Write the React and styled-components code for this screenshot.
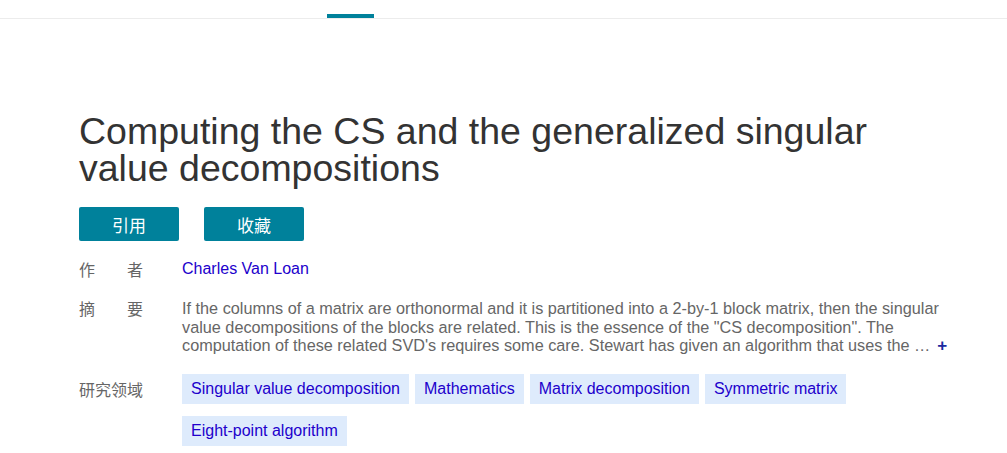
import React from 'react';
import styled, { createGlobalStyle } from 'styled-components';

const GlobalStyle = createGlobalStyle`
  body {
    margin: 0;
    background: #fff;
    font-family: "Liberation Sans", Arial, "Noto Sans CJK SC", sans-serif;
  }
`;

const TabBar = styled.div`
  display: flex;
  height: 18px;
  border-bottom: 1px solid #ececec;
  padding-left: 327px;
`;

const Tab = styled.div`
  width: 47px;
  align-self: flex-end;
  height: 4px;
  background: ${props => (props.active ? '#00819b' : 'transparent')};
`;

const Main = styled.main`
  width: 871px;
  padding: 94px 0 0 79px;
`;

const Title = styled.h1`
  margin: 0;
  max-width: 840px;
  font-size: 37.5px;
  line-height: 37px;
  font-weight: normal;
  color: #333;
`;

const Actions = styled.div`
  display: flex;
  gap: 25px;
  margin-top: 20px;
`;

const Button = styled.button`
  width: 100px;
  height: 34px;
  border: none;
  border-radius: 2px;
  background: #00819b;
  color: #fff;
  font-family: "Liberation Sans", "Noto Sans CJK SC", sans-serif;
  font-size: 17px;
  padding: 0;
  cursor: pointer;
`;

const Row = styled.div`
  display: flex;
  margin-top: ${props => props.gap}px;
`;

const Label = styled.div`
  flex: 0 0 64px;
  width: 64px;
  margin-right: 39px;
  font-family: "Noto Sans CJK SC", sans-serif;
  font-size: 16px;
  line-height: ${props => props.lh}px;
  color: #666;
  text-align: justify;
  text-align-last: justify;
  white-space: nowrap;
`;

const Author = styled.a`
  font-size: 16px;
  line-height: 22px;
  color: #2100cc;
  text-decoration: none;
`;

const Abstract = styled.p`
  margin: 0;
  flex: 1;
  font-size: 16.25px;
  line-height: 18.5px;
  color: #666;
`;

const More = styled.span`
  margin-left: 7px;
  color: #1b2aa0;
  font-weight: bold;
  font-size: 17px;
  cursor: pointer;
`;

const Tags = styled.div`
  flex: 1;
  display: flex;
  flex-wrap: wrap;
  gap: 12px 6px;
`;

const Tag = styled.span`
  height: 30px;
  line-height: 30px;
  padding: 0 9px;
  background: #deebfc;
  color: #2100cc;
  font-size: 16px;
  white-space: nowrap;
`;

const keywords = [
  'Singular value decomposition',
  'Mathematics',
  'Matrix decomposition',
  'Symmetric matrix',
  'Eight-point algorithm',
];

export default function App() {
  return (
    <>
      <GlobalStyle />
      <TabBar>
        <Tab active />
      </TabBar>
      <Main>
        <Title>Computing the CS and the generalized singular value decompositions</Title>
        <Actions>
          <Button>引用</Button>
          <Button>收藏</Button>
        </Actions>
        <Row gap={17}>
          <Label lh={22}>作 者</Label>
          <Author href="#">Charles Van Loan</Author>
        </Row>
        <Row gap={19}>
          <Label lh={18.5}>摘 要</Label>
          <Abstract>
            If the columns of a matrix are orthonormal and it is partitioned into a 2-by-1 block matrix, then the
            singular value decompositions of the blocks are related. This is the essence of the "CS decomposition".
            The computation of these related SVD's requires some care. Stewart has given an algorithm that uses the …
            <More>+</More>
          </Abstract>
        </Row>
        <Row gap={18}>
          <Label lh={30}>研究领域</Label>
          <Tags>
            {keywords.map(k => (
              <Tag key={k}>{k}</Tag>
            ))}
          </Tags>
        </Row>
      </Main>
    </>
  );
}
